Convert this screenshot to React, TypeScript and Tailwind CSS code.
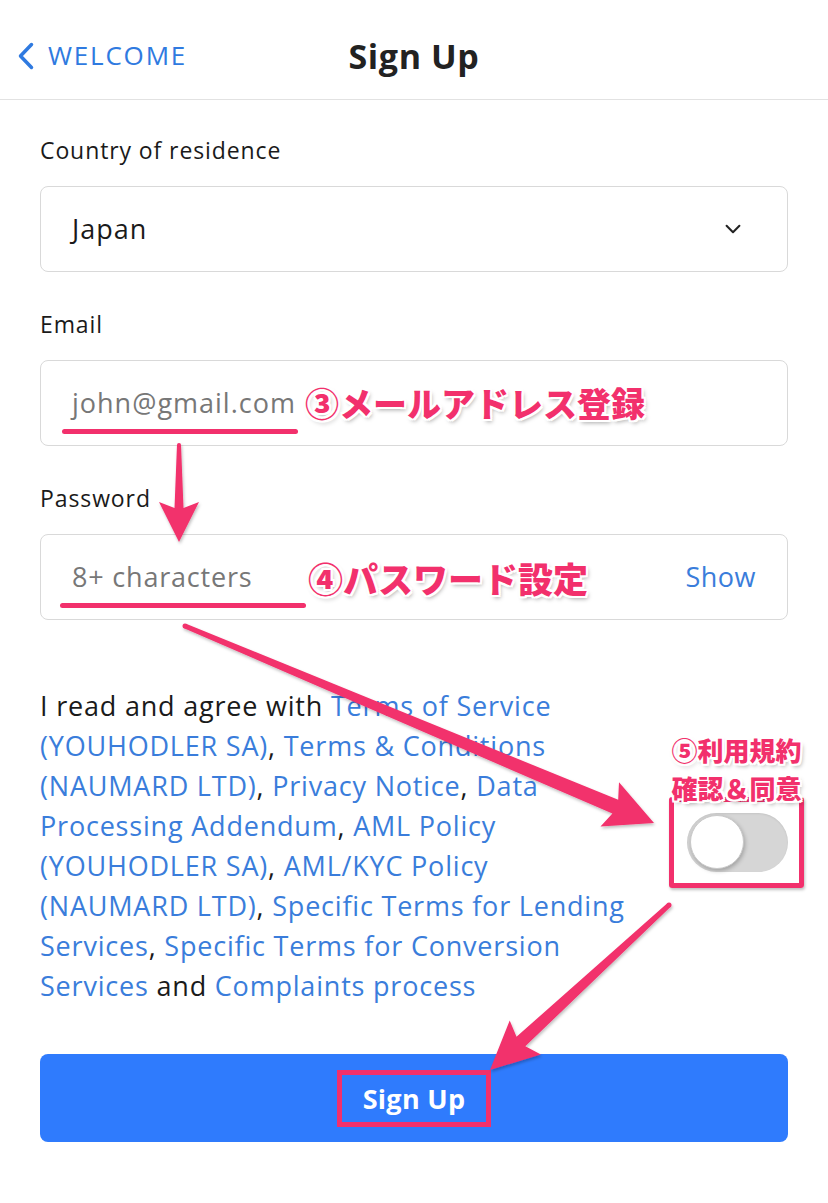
import React from "react";

const PINK = "#f2306c";

function arrowPoints(
  x1: number, y1: number, x2: number, y2: number,
  headLen: number, headHalf: number, w0: number, w1: number
) {
  const dx = x2 - x1, dy = y2 - y1;
  const L = Math.hypot(dx, dy);
  const ux = dx / L, uy = dy / L;
  const px = -uy, py = ux;
  const bx = x2 - ux * headLen, by = y2 - uy * headLen;
  const jx = bx + ux * 6, jy = by + uy * 6;
  const pts = [
    [x1 + (px * w0) / 2, y1 + (py * w0) / 2],
    [jx + (px * w1) / 2, jy + (py * w1) / 2],
    [bx + px * headHalf, by + py * headHalf],
    [x2, y2],
    [bx - px * headHalf, by - py * headHalf],
    [jx - (px * w1) / 2, jy - (py * w1) / 2],
    [x1 - (px * w0) / 2, y1 - (py * w0) / 2],
  ];
  return pts.map((p) => `${p[0].toFixed(1)},${p[1].toFixed(1)}`).join(" ");
}

function Link({ children }: { children: React.ReactNode }) {
  return <span className="text-[#3a7ddb]">{children}</span>;
}

const annot =
  "font-['Noto_Sans_CJK_JP',sans-serif] font-black text-[#f2306c] [text-shadow:2px_0_0_#fff,-2px_0_0_#fff,0_2px_0_#fff,0_-2px_0_#fff,2px_2px_0_#fff,-2px_-2px_0_#fff,2px_-2px_0_#fff,-2px_2px_0_#fff,2px_3px_4px_rgba(0,0,0,0.35)]";

export default function App() {
  return (
    <div className="relative w-[828px] h-[1203px] bg-white overflow-hidden font-['Open_Sans',sans-serif] text-[#1a1a1a]">
      {/* Header */}
      <header className="h-[100px] pt-[12px] border-b border-[#e2e2e2] grid grid-cols-[1fr_auto_1fr] items-center">
        <div className="flex items-center pl-[18px] text-[#2f7ae0]">
          <svg width="16" height="28" viewBox="0 0 16 28" className="mr-[14px]">
            <polyline points="13.5,2.5 2.5,14 13.5,25.5" fill="none" stroke="#2f7ae0" strokeWidth="3.5" strokeLinecap="round" strokeLinejoin="round" />
          </svg>
          <span className="text-[26px] font-medium tracking-[1.8px]">WELCOME</span>
        </div>
        <h1 className="text-[34px] font-bold text-[#222] leading-none tracking-[0.6px]">Sign Up</h1>
        <div />
      </header>

      <main className="px-10 pt-[35px]">
        <div className="text-[23px] leading-[30px] tracking-[0.9px]">Country of residence</div>
        <div className="mt-[21px] h-[86px] border border-[#d9d9d9] rounded-lg px-[31px] flex items-center">
          <span className="text-[27px] tracking-[1px]">Japan</span>
          <svg width="22" height="22" viewBox="0 0 24 24" className="ml-auto mr-[12px]">
            <polyline points="5,8.5 12,15.5 19,8.5" fill="none" stroke="#222" strokeWidth="2.2" strokeLinecap="round" strokeLinejoin="round" />
          </svg>
        </div>

        <div className="mt-[37px] text-[23px] leading-[30px] tracking-[0.9px]">Email</div>
        <div className="mt-[21px] h-[86px] border border-[#d9d9d9] rounded-lg px-[31px] flex items-center">
          <div className="w-[233px] shrink-0">
            <span className="relative text-[27px] tracking-[1px] text-[#777]">
              john@gmail.com
              <span className="absolute left-[-10px] w-[236px] bottom-[-13px] h-[5px] rounded-full bg-[#f2306c]" />
            </span>
          </div>
          <span className={`${annot} text-[34px] leading-none`}>③メールアドレス登録</span>
        </div>

        <div className="mt-[37px] text-[23px] leading-[30px] tracking-[0.9px]">Password</div>
        <div className="mt-[21px] h-[86px] border border-[#d9d9d9] rounded-lg px-[31px] flex items-center">
          <div className="w-[236px] shrink-0">
            <span className="relative text-[27px] tracking-[0.8px] text-[#777]">
              8+ characters
              <span className="absolute left-[-12px] w-[246px] bottom-[-13px] h-[5px] rounded-full bg-[#f2306c]" />
            </span>
          </div>
          <span className={`${annot} text-[35px] leading-none`}>④パスワード設定</span>
          <span className="ml-auto text-[27px] tracking-[0.5px] text-[#3a7ddb]">Show</span>
        </div>

        {/* Terms */}
        <div className="mt-[66px] flex items-center justify-between">
          <p className="text-[27px] leading-[40px] tracking-[0.8px]">
            I read and agree with <Link>Terms of Service</Link>
            <br />
            <Link>(YOUHODLER SA)</Link>, <Link>Terms &amp; Conditions</Link>
            <br />
            <Link>(NAUMARD LTD)</Link>, <Link>Privacy Notice</Link>, <Link>Data</Link>
            <br />
            <Link>Processing Addendum</Link>, <Link>AML Policy</Link>
            <br />
            <Link>(YOUHODLER SA)</Link>, <Link>AML/KYC Policy</Link>
            <br />
            <Link>(NAUMARD LTD)</Link>, <Link>Specific Terms for Lending</Link>
            <br />
            <Link>Services</Link>, <Link>Specific Terms for Conversion</Link>
            <br />
            <Link>Services</Link> and <Link>Complaints process</Link>
          </p>
          <div className="pb-[8px]">
            <div className="relative">
              <div className="w-[101px] h-[59px] rounded-full bg-[#d6d6d6] p-[3px] flex items-center shadow-[inset_0_1px_2px_rgba(0,0,0,0.08)]">
                <div className="w-[54px] h-[54px] rounded-full bg-white border border-[#c9c9c9] shadow-[1px_2px_4px_rgba(0,0,0,0.25)]" />
              </div>
              <div className="absolute left-[-18px] right-[-16px] top-[-16px] bottom-[-16px] border-[5px] border-[#f2306c] rounded-[3px] shadow-[1px_2px_3px_rgba(0,0,0,0.25)]">
                <div className={`${annot} absolute bottom-full mb-[-5px] left-[-4px] right-[-4px] text-center text-[26px] leading-[38px] whitespace-nowrap`}>
                  ⑤利用規約
                  <br />
                  確認＆同意
                </div>
              </div>
            </div>
          </div>
        </div>

        {/* Button */}
        <div className="mt-[48px] h-[88px] rounded-lg bg-[#2f7bfd] flex items-center justify-center">
          <span className="border-[5px] border-[#f2306c] px-[21px] py-[6px] text-white text-[27px] font-bold leading-[35px] tracking-[0.3px]">
            Sign Up
          </span>
        </div>
      </main>

      {/* Annotation arrows overlay */}
      <svg className="absolute inset-0 pointer-events-none" width="828" height="1203" viewBox="0 0 828 1203">
        <defs>
          <filter id="sh" x="-10%" y="-10%" width="120%" height="120%">
            <feDropShadow dx="1" dy="2" stdDeviation="1.5" floodColor="#000" floodOpacity="0.25" />
          </filter>
        </defs>
        <g fill={PINK} filter="url(#sh)">
          <polygon points={arrowPoints(179, 445, 179, 542, 40, 20, 4, 9)} />
          <circle cx="179" cy="445" r="2" />
          <polygon points={arrowPoints(185, 626, 654, 823, 48, 24, 5, 15)} />
          <circle cx="185" cy="626" r="2.5" />
          <polygon points={arrowPoints(669, 905, 490, 1070, 48, 23, 5, 13)} />
          <circle cx="669" cy="905" r="2.5" />
        </g>
      </svg>
    </div>
  );
}
